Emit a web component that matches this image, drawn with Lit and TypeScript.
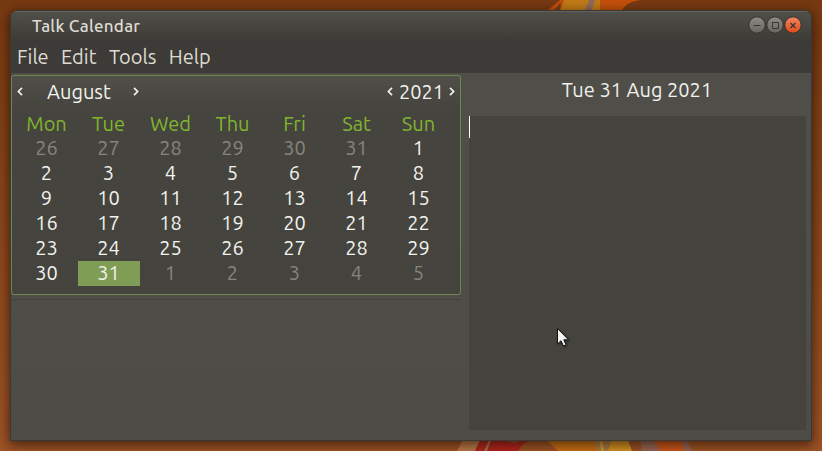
import { LitElement, html, css, svg } from "lit";
import { customElement, property } from "lit/decorators.js";
import { classMap } from "lit/directives/class-map.js";

@customElement("chevron-icon")
class ChevronIcon extends LitElement {
  @property() dir = "left";
  static styles = css`
    :host { display: block; width: 6px; height: 10px; }
    svg { display: block; }
    path { fill: none; stroke: #f2f2ee; stroke-width: 1.7; }
  `;
  render() {
    const d = this.dir === "left" ? "M5 0.9 L1.4 4.5 L5 8.1" : "M1 0.9 L4.6 4.5 L1 8.1";
    return html`<svg width="6" height="10" viewBox="0 0 6 10">${svg`<path d=${d} />`}</svg>`;
  }
}

@customElement("month-calendar")
class MonthCalendar extends LitElement {
  static styles = css`
    :host {
      display: block; box-sizing: border-box; width: 450px; height: 220px;
      border: 1px solid #6f8850; border-radius: 3px;
      background: linear-gradient(#504f49 0px, #45443e 32px, #44433d 100%);
      color: #f2f2ee;
    }
    .head { display: flex; align-items: center; height: 32px; padding: 0 5px 0 5px; box-sizing: border-box; }
    .month { width: 65px; margin-left: 24px; margin-right: 21px; }
    .space { flex: 1; }
    .year { margin: 0 5px 0 6px; }
    .head span { line-height: 32px; }
    .grid {
      display: grid; grid-template-columns: repeat(7, 62px);
      grid-template-rows: 28px repeat(6, 25px); padding-left: 4px; text-align: center;
    }
    .name { color: #80b52d; line-height: 31px; padding-right: 1px; }
    .day { line-height: 23px; padding-right: 1px; }
    .other { color: #85847f; }
    .selected { background: #7f9d55; }
  `;
  render() {
    const names = ["Mon", "Tue", "Wed", "Thu", "Fri", "Sat", "Sun"];
    const days = Array.from({ length: 42 }, (_, i) => {
      const n = i - 5;
      return { label: n < 1 ? n + 31 : n > 31 ? n - 31 : n, other: n < 1 || n > 31, selected: n === 31 };
    });
    return html`
      <div class="head">
        <chevron-icon></chevron-icon><span class="month">August</span><chevron-icon dir="right"></chevron-icon>
        <div class="space"></div>
        <chevron-icon></chevron-icon><span class="year">2021</span><chevron-icon dir="right"></chevron-icon>
      </div>
      <div class="grid">
        ${names.map((n) => html`<div class="name">${n}</div>`)}
        ${days.map((d) => html`<div class=${classMap({ day: true, other: d.other, selected: d.selected })}>${d.label}</div>`)}
      </div>`;
  }
}

@customElement("app-root")
class AppRoot extends LitElement {
  static styles = css`
    :host {
      display: block; position: relative; width: 822px; height: 451px; overflow: hidden;
      font: 20px/25px "Ubuntu", "Noto Sans", sans-serif; color: #e6e5e0;
    }
    .wallpaper { position: absolute; inset: 0; display: block; }
    .window {
      position: absolute; left: 10px; top: 10px; width: 802px; height: 431px; box-sizing: border-box;
      display: flex; flex-direction: column; overflow: hidden;
      border: 1px solid #393834; border-radius: 7px 7px 0 0; background: #4d4c46;
    }
    .shade { position: absolute; left: 10px; top: 10px; width: 802px; height: 431px; border-radius: 7px 7px 0 0;
      box-shadow: 0 3px 12px 1px rgba(20, 8, 0, 0.62); }
    .titlebar {
      height: 29px; flex: none; display: flex; align-items: center; justify-content: space-between;
      padding: 0 9px 1px 21px; box-sizing: border-box;
      background: linear-gradient(#504f49, #3d3c37); box-shadow: inset 0 1px #62615b;
      color: #dfdbd2; font-size: 17px; font-weight: 500; letter-spacing: 0.25px;
    }
    .menubar { height: 33px; flex: none; display: flex; padding-left: 6px; background: #3c3b37; line-height: 34px; color: #dfdbd2; }
    .menubar span { margin-right: 12.4px; }
    .body { flex: 1; display: flex; background: linear-gradient(#4f4e48, #4d4c46); }
    .left { width: 458px; padding-top: 2px; }
    .rule { width: 450px; height: 1px; margin-top: 4px; background: #44433e; }
    .right { width: 337px; }
    .date { height: 43px; line-height: 34px; text-align: center; color: #f0f0ec; padding-right: 1px; }
    .notes { height: 314px; background: #44433d; }
    .caret { width: 1px; height: 22px; background: #fff; }
    .cursor { position: absolute; left: 556px; top: 327px; filter: drop-shadow(1px 1px 1px rgba(0, 0, 0, 0.4)); }
  `;
  render() {
    return html`
      <svg class="wallpaper" width="822" height="451" viewBox="0 0 822 451">
        <defs><linearGradient id="bg" x2="0" y2="1">
          <stop offset="0" stop-color="#773911" /><stop offset="1" stop-color="#9d5325" />
        </linearGradient></defs>
        <rect width="822" height="451" fill="url(#bg)" />
        <path d="M548 10 L560 0 H640 Q625 2 621 12 H548Z" fill="#c4500c" />
        <path d="M554 10 L561 2 L560 10Z" fill="#7a3d14" />
        <path d="M564 0 H600 V12 H560Z" fill="#c17b17" />
        <path d="M589 0 H595 L591 12 H584Z" fill="#91695a" />
        <path d="M457 451 L464 438 H482 L475 451Z" fill="#b97848" />
        <path d="M475 451 L481 438 H535 Q522 443 518 451Z" fill="#b0241c" />
        <path d="M504 438 H524 Q514 448 504 438Z" fill="#97522a" />
        <path d="M484 451 L490 438 H492 L487 451Z" fill="#a77159" />
        <path d="M545 438 H600 V451 H558Z" fill="#c66e14" />
        <path d="M594 438 H610 L613 451 H597Z" fill="#a77b42" />
        <path d="M599 438 H602 L604 451 H601Z" fill="#cf9a30" />
        <path d="M612 438 H627 L632 451 H608Z" fill="#d19122" />
        <path d="M640 438 H686 L692 451 H642Z" fill="#966451" />
        <path d="M653 438 H681 L684 451 H660Z" fill="#c9551a" />
      </svg>
      <div class="shade"></div>
      <div class="window">
        <div class="titlebar">
          <span>Talk Calendar</span>
          <svg width="54" height="18" viewBox="0 0 54 18">
            <defs>
              <linearGradient id="g" x2="0" y2="1"><stop offset="0" stop-color="#8b8a83" /><stop offset="1" stop-color="#66655f" /></linearGradient>
              <linearGradient id="o" x2="0" y2="1"><stop offset="0" stop-color="#f38562" /><stop offset="1" stop-color="#e04a19" /></linearGradient>
            </defs>
            <g stroke="#34332f" stroke-width="1">
              <circle cx="9" cy="9" r="8.2" fill="url(#g)" /><circle cx="27" cy="9" r="8.2" fill="url(#g)" /><circle cx="45" cy="9" r="8.2" fill="url(#o)" />
            </g>
            <g fill="none" stroke="#3a3934">
              <path d="M5.5 9.5 H12.5" /><path d="M24 6.5 H30.5 V12.5 H24.5 V6.5" />
              <path d="M42.5 7 L47.5 12 M47.5 7 L42.5 12" stroke-width="1.4" />
            </g>
          </svg>
        </div>
        <div class="menubar"><span>File</span><span>Edit</span><span>Tools</span><span>Help</span></div>
        <div class="body">
          <div class="left"><month-calendar></month-calendar><div class="rule"></div></div>
          <div class="right"><div class="date">Tue 31 Aug 2021</div><div class="notes"><div class="caret"></div></div></div>
        </div>
      </div>
      <svg class="cursor" width="14" height="21" viewBox="0 0 14 21">
        <path d="M1.5 1.5 V17 L5 13.7 L7.5 19 L10 17.8 L7.8 12.8 H12.5 Z" fill="#f4f4f4" stroke="#111" />
      </svg>`;
  }
}
